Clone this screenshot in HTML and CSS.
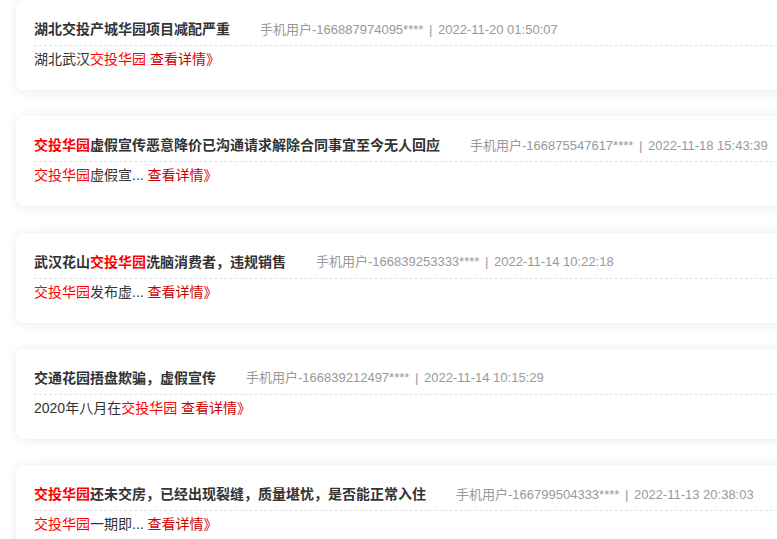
FILE: index.html
```html
<!DOCTYPE html>
<html lang="zh-CN">
<head>
<meta charset="utf-8">
<title>投诉列表</title>
<link rel="stylesheet" href="styles.css">
</head>
<body>
<div class="list">
  <div class="card">
    <div class="head">
      <span class="title">湖北交投产城华园项目减配严重</span>
      <span class="meta">手机用户-166887974095**** <span class="sep">|</span> 2022-11-20 01:50:07</span>
    </div>
    <div class="desc">湖北武汉<span class="hl">交投华园</span> <span class="more">查看详情》</span></div>
  </div>
  <div class="card">
    <div class="head">
      <span class="title"><span class="hl">交投华园</span>虚假宣传恶意降价已沟通请求解除合同事宜至今无人回应</span>
      <span class="meta">手机用户-166875547617**** <span class="sep">|</span> 2022-11-18 15:43:39</span>
    </div>
    <div class="desc"><span class="hl">交投华园</span>虚假宣... <span class="more">查看详情》</span></div>
  </div>
  <div class="card">
    <div class="head">
      <span class="title">武汉花山<span class="hl">交投华园</span>洗脑消费者，违规销售</span>
      <span class="meta">手机用户-166839253333**** <span class="sep">|</span> 2022-11-14 10:22:18</span>
    </div>
    <div class="desc"><span class="hl">交投华园</span>发布虚... <span class="more">查看详情》</span></div>
  </div>
  <div class="card">
    <div class="head">
      <span class="title">交通花园捂盘欺骗，虚假宣传</span>
      <span class="meta">手机用户-166839212497**** <span class="sep">|</span> 2022-11-14 10:15:29</span>
    </div>
    <div class="desc">2020年八月在<span class="hl">交投华园</span> <span class="more">查看详情》</span></div>
  </div>
  <div class="card">
    <div class="head">
      <span class="title"><span class="hl">交投华园</span>还未交房，已经出现裂缝，质量堪忧，是否能正常入住</span>
      <span class="meta">手机用户-166799504333**** <span class="sep">|</span> 2022-11-13 20:38:03</span>
    </div>
    <div class="desc"><span class="hl">交投华园</span>一期即... <span class="more">查看详情》</span></div>
  </div>
</div>
</body>
</html>
```

FILE: styles.css
```css
html, body {
  margin: 0;
  padding: 0;
  overflow: hidden;
  background: #fff;
}
body {
  font-family: "Liberation Sans", "Noto Sans CJK SC", sans-serif;
  color: #333;
}
.list {
  padding: 0 0 0 16px;
  width: 820px;
}
.card {
  background: #fff;
  border-radius: 8px;
  box-shadow: 0 1px 12px rgba(0, 0, 0, 0.09);
  padding: 18px 18px 21px 18px;
  margin-bottom: 26.3px;
}
.head {
  display: flex;
  align-items: center;
  height: 20px;
  padding-bottom: 7px;
  border-bottom: 1px dashed #e0e0e0;
  white-space: nowrap;
}
.title {
  font-size: 14px;
  font-weight: bold;
  color: #333;
}
.meta {
  margin-left: 30px;
  font-size: 13px;
  color: #999;
}
.sep {
  margin: 0 2px;
}
.desc {
  margin-top: 3px;
  font-size: 14px;
  line-height: 20px;
  color: #333;
  white-space: nowrap;
}
.hl {
  color: #f00;
}
.more {
  color: #c00;
}
```
